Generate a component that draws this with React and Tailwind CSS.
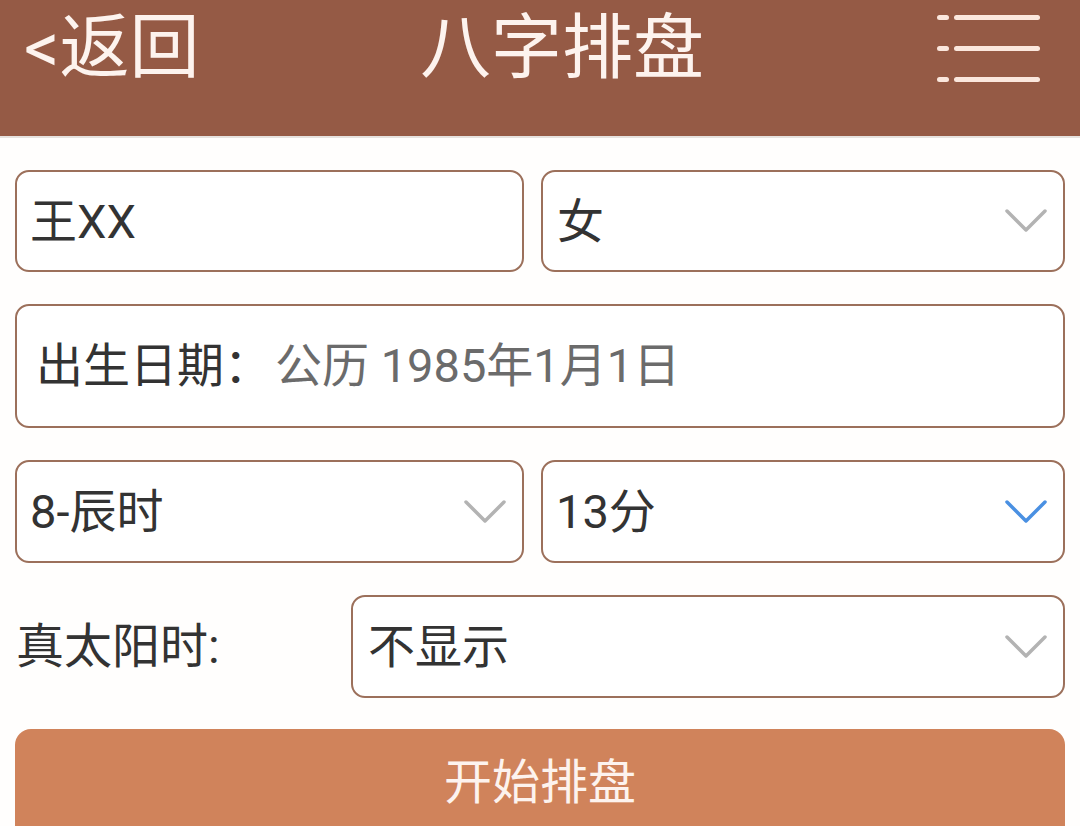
import React from "react";

const font = { fontFamily: 'Roboto, "Noto Sans CJK SC", "Noto Sans", sans-serif' };

const Chevron = ({ color = "#b3b3b3" }) => (
  <svg width="42" height="26" viewBox="0 0 42 26" fill="none">
    <path d="M2 3 L21 22 L40 3" stroke={color} strokeWidth="3.5" strokeLinecap="round" strokeLinejoin="round" />
  </svg>
);

const Box = ({ className = "", children }) => (
  <div className={`flex items-center border-2 border-[#9c705b] rounded-[14px] bg-white ${className}`}>
    {children}
  </div>
);

export default function App() {
  return (
    <div className="w-[1080px] h-[826px] overflow-hidden bg-[#fffefd]" style={font}>
      {/* header */}
      <div className="h-[138px] bg-[#955a45] border-b-2 border-[#e6e2df] flex items-start justify-between px-[24px]">
        <div className="text-[70px] leading-[96px] text-[#fdf3ee] w-[230px] whitespace-nowrap">&lt;返回</div>
        <div className="text-[71px] leading-[96px] text-[#fdf3ee] pl-[44px] whitespace-nowrap">八字排盘</div>
        <div className="w-[230px] flex justify-end pr-[16px] pt-[15px]">
          <div className="flex flex-col gap-[26px]">
            {[0, 1, 2].map((i) => (
              <div key={i} className="flex items-center gap-[5px]">
                <div className="w-[12px] h-[5px] rounded-full bg-[#fbe7dd]" />
                <div className="w-[86px] h-[5px] rounded-full bg-[#fbe7dd]" />
              </div>
            ))}
          </div>
        </div>
      </div>

      {/* form */}
      <div className="px-[15px] pt-[32px] flex flex-col gap-[32px]">
        <div className="flex gap-[17px]">
          <Box className="w-[509px] h-[102px] pl-[13px] pt-[2px]">
            <span className="text-[47px] text-[#333]">王XX</span>
          </Box>
          <Box className="flex-1 h-[102px] pl-[14px] pr-[16px] justify-between">
            <span className="text-[47px] text-[#333] pt-[2px]">女</span>
            <Chevron />
          </Box>
        </div>

        <Box className="h-[124px] pl-[19px]">
          <span className="text-[47px] text-[#333]">出生日期：</span>
          <span className="text-[47px] text-[#6b6b6b] ml-[4px]">公历 1985年1月1日</span>
        </Box>

        <div className="flex gap-[17px]">
          <Box className="w-[509px] h-[103px] pl-[13px] pr-[16px] justify-between">
            <span className="text-[47px] text-[#333] pt-[2px]">8-辰时</span>
            <Chevron />
          </Box>
          <Box className="flex-1 h-[103px] pl-[13px] pr-[16px] justify-between">
            <span className="text-[47px] text-[#333] pt-[2px]">13分</span>
            <Chevron color="#4a90e2" />
          </Box>
        </div>

        <div className="flex items-center">
          <div className="w-[336px] pl-[1px] text-[48px] text-[#333]">真太阳时:</div>
          <Box className="flex-1 h-[103px] pl-[15px] pr-[16px] justify-between">
            <span className="text-[47px] text-[#333] pt-[2px]">不显示</span>
            <Chevron />
          </Box>
        </div>

        <div className="h-[120px] -mt-[1px] rounded-[16px] bg-[#d0835b] flex justify-center pt-[22px]">
          <span className="text-[48px] text-[#fdf3ee] leading-[64px]">开始排盘</span>
        </div>
      </div>
    </div>
  );
}
